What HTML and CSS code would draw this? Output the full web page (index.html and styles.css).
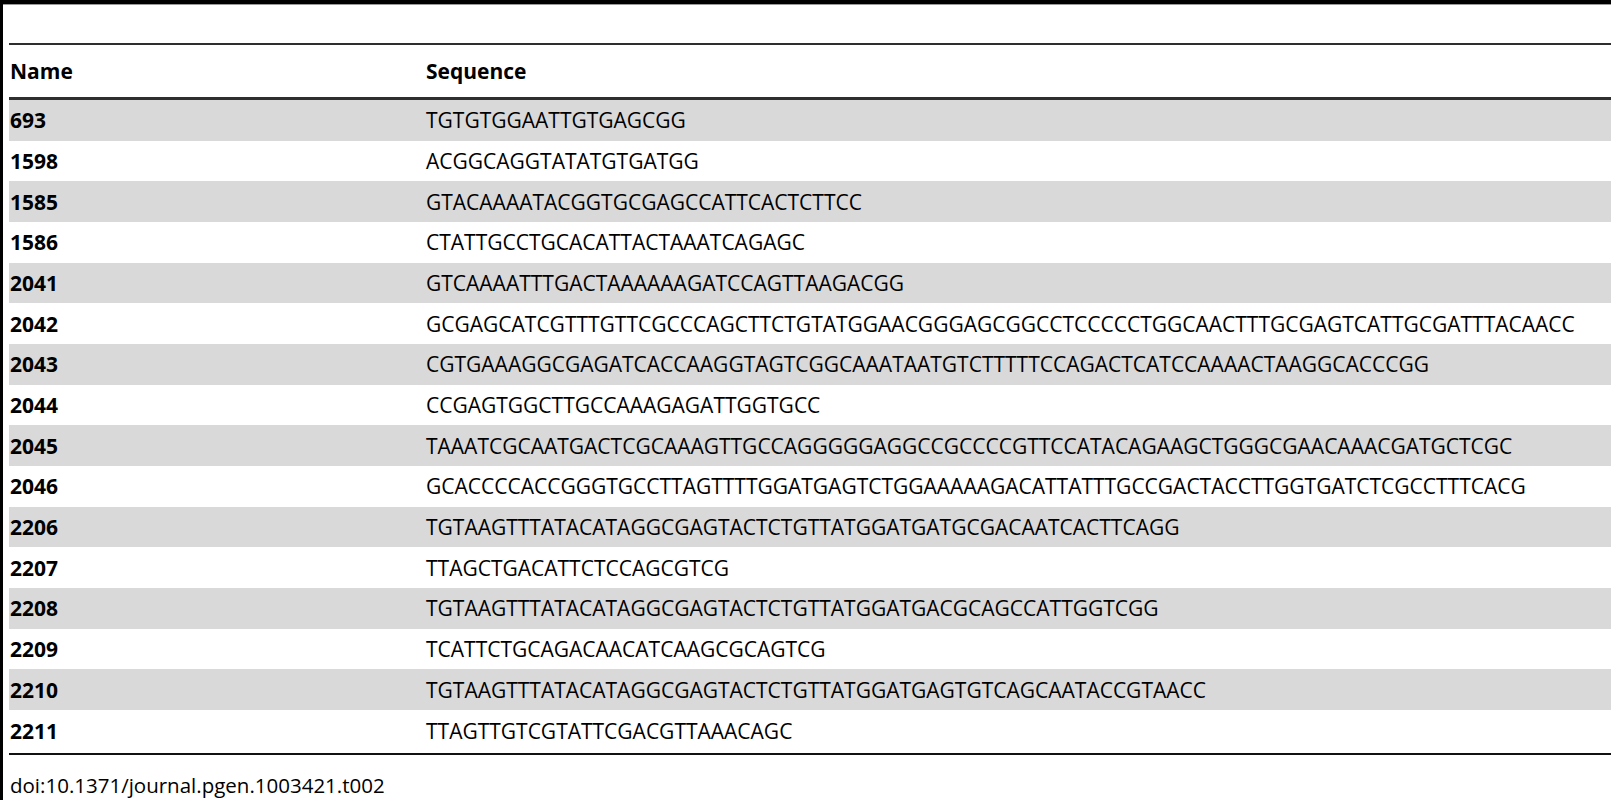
FILE: index.html
```html
<!DOCTYPE html>
<html>
<head>
<meta charset="utf-8">
<link rel="stylesheet" href="styles.css">
</head>
<body>
<div class="frame">
  <div class="inner">
    <table class="seq-table">
      <thead>
        <tr><th class="c-name">Name</th><th class="c-seq">Sequence</th></tr>
      </thead>
      <tbody>
        <tr class="alt"><td class="c-name">693</td><td class="c-seq">TGTGTGGAATTGTGAGCGG</td></tr>
        <tr><td class="c-name">1598</td><td class="c-seq">ACGGCAGGTATATGTGATGG</td></tr>
        <tr class="alt"><td class="c-name">1585</td><td class="c-seq">GTACAAAATACGGTGCGAGCCATTCACTCTTCC</td></tr>
        <tr><td class="c-name">1586</td><td class="c-seq">CTATTGCCTGCACATTACTAAATCAGAGC</td></tr>
        <tr class="alt"><td class="c-name">2041</td><td class="c-seq">GTCAAAATTTGACTAAAAAAGATCCAGTTAAGACGG</td></tr>
        <tr><td class="c-name">2042</td><td class="c-seq">GCGAGCATCGTTTGTTCGCCCAGCTTCTGTATGGAACGGGAGCGGCCTCCCCCTGGCAACTTTGCGAGTCATTGCGATTTACAACC</td></tr>
        <tr class="alt"><td class="c-name">2043</td><td class="c-seq">CGTGAAAGGCGAGATCACCAAGGTAGTCGGCAAATAATGTCTTTTTCCAGACTCATCCAAAACTAAGGCACCCGG</td></tr>
        <tr><td class="c-name">2044</td><td class="c-seq">CCGAGTGGCTTGCCAAAGAGATTGGTGCC</td></tr>
        <tr class="alt"><td class="c-name">2045</td><td class="c-seq">TAAATCGCAATGACTCGCAAAGTTGCCAGGGGGAGGCCGCCCCGTTCCATACAGAAGCTGGGCGAACAAACGATGCTCGC</td></tr>
        <tr><td class="c-name">2046</td><td class="c-seq">GCACCCCACCGGGTGCCTTAGTTTTGGATGAGTCTGGAAAAAGACATTATTTGCCGACTACCTTGGTGATCTCGCCTTTCACG</td></tr>
        <tr class="alt"><td class="c-name">2206</td><td class="c-seq">TGTAAGTTTATACATAGGCGAGTACTCTGTTATGGATGATGCGACAATCACTTCAGG</td></tr>
        <tr><td class="c-name">2207</td><td class="c-seq">TTAGCTGACATTCTCCAGCGTCG</td></tr>
        <tr class="alt"><td class="c-name">2208</td><td class="c-seq">TGTAAGTTTATACATAGGCGAGTACTCTGTTATGGATGACGCAGCCATTGGTCGG</td></tr>
        <tr><td class="c-name">2209</td><td class="c-seq">TCATTCTGCAGACAACATCAAGCGCAGTCG</td></tr>
        <tr class="alt"><td class="c-name">2210</td><td class="c-seq">TGTAAGTTTATACATAGGCGAGTACTCTGTTATGGATGAGTGTCAGCAATACCGTAACC</td></tr>
        <tr class="last"><td class="c-name">2211</td><td class="c-seq">TTAGTTGTCGTATTCGACGTTAAACAGC</td></tr>
      </tbody>
    </table>
    <div class="caption">doi:10.1371/journal.pgen.1003421.t002</div>
  </div>
</div>
</body>
</html>
```

FILE: styles.css
```css
html, body {
  margin: 0;
  padding: 0;
  background: #ffffff;
}
body {
  font-family: "Open Sans", "Liberation Sans", sans-serif;
  color: #000000;
  height: 800px;
  overflow: hidden;
}
.frame {
  border-left: 3px solid #000000;
  border-top: 4px solid #000000;
  box-shadow: inset 0 1px 0 #9a9a9a;
  min-height: 800px;
  box-sizing: border-box;
}
.inner {
  padding-top: 39px;
  padding-left: 6px;
}
.seq-table {
  width: 100%;
  border-collapse: collapse;
  border-top: 2px solid #2e2e2e;
  border-bottom: 2px solid #111111;
  font-size: 21px;
}
.seq-table th {
  text-align: left;
  font-weight: 700;
  height: 52px;
  padding: 0;
  border-bottom: 3px solid #2f2f2f;
  vertical-align: middle;
}
.seq-table td {
  height: 40.67px;
  padding: 0;
  vertical-align: middle;
  white-space: nowrap;
}
.seq-table td.c-name {
  font-weight: 700;
}
.c-name {
  width: 416px;
  padding-left: 1px !important;
}
.seq-table tr.alt td {
  background: #d9d9d9;
}
.seq-table tr.last td {
  height: 43px;
}
.caption {
  font-size: 20.5px;
  padding-left: 1px;
  padding-top: 16px;
}
```
